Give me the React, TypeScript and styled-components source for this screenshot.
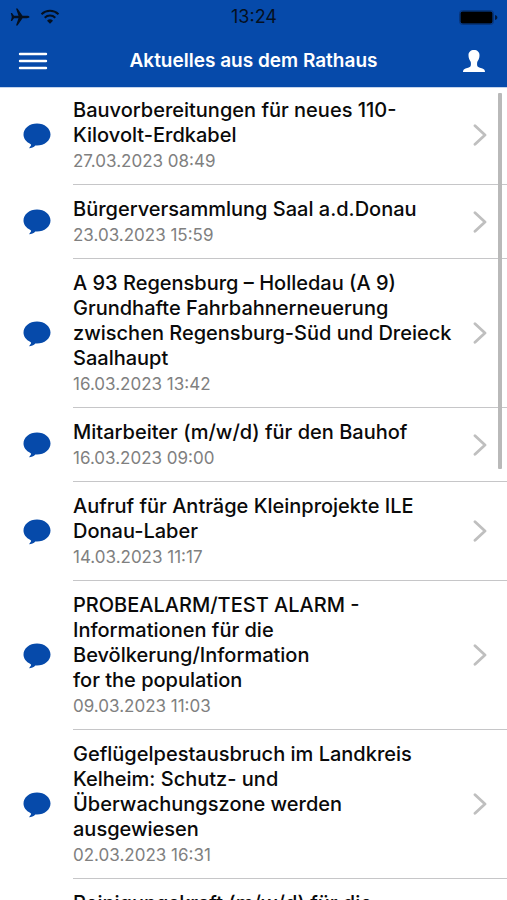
import React from "react";
import styled, { createGlobalStyle } from "styled-components";

const BLUE = "#064aaa";

const GlobalStyle = createGlobalStyle`
  *, *::before, *::after { box-sizing: border-box; }
  body {
    margin: 0;
    background: #fff;
    font-family: Inter, "Liberation Sans", sans-serif;
  }
`;

const Screen = styled.div`
  display: flex;
  flex-direction: column;
  height: 100vh;
  overflow: hidden;
`;

const Header = styled.header`
  flex: none;
  position: relative;
  z-index: 1;
  background: ${BLUE};
  box-shadow: 0 1px 0 ${BLUE}, 0 2px 0 #c3d4ec;
`;

const StatusBar = styled.div`
  display: grid;
  grid-template-columns: 1fr auto 1fr;
  align-items: center;
  height: 34px;
  padding: 0 9px 0 10px;
  color: #05101f;
`;

const StatusGroup = styled.div<{ $end?: boolean }>`
  display: flex;
  align-items: center;
  gap: 10px;
  justify-content: ${(p) => (p.$end ? "flex-end" : "flex-start")};
`;

const Clock = styled.time`
  font-size: 18px;
  line-height: 20px;
`;

const NavBar = styled.nav`
  display: grid;
  grid-template-columns: 48px 1fr 48px;
  align-items: center;
  height: 52px;
  padding: 2px 9px 0;
`;

const IconButton = styled.button`
  display: flex;
  align-items: center;
  justify-content: center;
  height: 44px;
  padding: 0;
  border: 0;
  background: none;
  color: #fff;
  cursor: pointer;
`;

const PageTitle = styled.h1`
  margin: 0;
  color: #fff;
  font-size: 19px;
  font-weight: 600;
  line-height: 24px;
  text-align: center;
`;

const ListArea = styled.main`
  position: relative;
  flex: 1;
  min-height: 0;
`;

const NewsList = styled.ul`
  height: 100%;
  margin: 0;
  padding: 0;
  overflow-y: auto;
  list-style: none;
  scrollbar-width: none;
`;

const NewsLink = styled.a`
  display: grid;
  grid-template-columns: 73px 1fr;
  min-height: 74px;
  color: inherit;
  text-decoration: none;
`;

const BubbleCell = styled.span`
  display: flex;
  align-items: center;
  justify-content: center;
  color: ${BLUE};
`;

const NewsBody = styled.span`
  display: flex;
  align-items: center;
  justify-content: space-between;
  gap: 12px;
  padding-right: 20px;
  border-bottom: 1px solid #c6c6c8;
`;

const NewsText = styled.span`
  flex: 1;
  align-self: flex-start;
  min-width: 0;
  padding: 12px 0 10px;
`;

const NewsTitle = styled.span`
  display: block;
  color: #0a0a0a;
  font-size: 20px;
  font-weight: 500;
  line-height: 25px;
`;

const NewsDate = styled.time`
  display: block;
  color: #808080;
  font-size: 17px;
  line-height: 26px;
`;

const ScrollThumb = styled.div`
  position: absolute;
  top: 7px;
  right: 5px;
  bottom: 53%;
  width: 4px;
  border-radius: 1px;
  background: #b9b9b9;
`;

const PlaneIcon = () => (
  <svg width="20" height="18" viewBox="0 0 20 18" fill="currentColor" aria-hidden="true">
    <path d="M19.500 9c0-.7-1.200-1.200-2.600-1.200H12.500L7.500 .5H6L8.500 7.800H4L2 5H.8L1.800 9 .8 13H2l2-2.800h4.500L6 17.500h1.500l5-7.300h4.400C18.300 10.200 19.500 9.700 19.500 9z" />
  </svg>
);

const WifiIcon = () => (
  <svg width="20" height="16" viewBox="0 0 20 16" fill="none" stroke="currentColor" strokeWidth="2" aria-hidden="true">
    <path d="M1.500 5.200a12.500 12.500 0 0 1 17 0" />
    <path d="M4.700 8.700a7.800 7.800 0 0 1 10.600 0" />
    <path d="M10 14.800 7 11.700a4.400 4.400 0 0 1 6 0z" fill="currentColor" stroke="none" />
  </svg>
);

const BatteryIcon = () => (
  <svg width="39" height="15" viewBox="0 0 39 15" aria-hidden="true">
    <rect x="0.500" y="0.500" width="34" height="14" rx="3" fill="none" stroke="#06357c" />
    <rect x="1.500" y="1.500" width="32" height="12" rx="2" fill="#000" />
    <path d="M36 5c1.600.4 2.400 1.300 2.400 2.500S37.600 9.600 36 10z" fill="#041a3c" />
  </svg>
);

const MenuIcon = () => (
  <svg width="30" height="18" viewBox="0 0 30 18" stroke="currentColor" strokeWidth="2.400" strokeLinecap="round" aria-hidden="true">
    <path d="M2 2h26M2 9h26M2 16h26" />
  </svg>
);

const PersonIcon = () => (
  <svg width="22" height="22" viewBox="0 0 22 22" fill="currentColor" aria-hidden="true">
    <path d="M11 0C7.700 0 5.500 2 5.500 5.300c0 1.400.2 2.500.7 3.600.5 1.400 1.400 2.200 1.600 3.400.2 1.600.3 3.600-.7 4.500-1.400 1.200-4.400 1.300-5.900 2.400C.3 19.900 0 20.800 0 22h22c0-1.200-.3-2.100-1.200-2.800-1.500-1.100-4.500-1.200-5.900-2.400-1-.9-.9-2.900-.7-4.500.2-1.200 1.100-2 1.600-3.400.5-1.100.7-2.200.7-3.600C16.500 2 14.300 0 11 0z" />
  </svg>
);

const BubbleIcon = () => (
  <svg width="28" height="26" viewBox="0 0 28 26" fill="currentColor" aria-hidden="true">
    <path d="M14 .5C6.500.5.500 5.400.500 11.500c0 4 2.600 7.400 6.900 9.400.9.500.9 1.100.4 1.800-.5.8-1.200 1.600-1.800 2.500 2.400-.2 4.800-1 6.300-2.800l1.700.1c7.500 0 13.500-4.900 13.500-11S21.500.5 14 .5z" />
  </svg>
);

const ChevronIcon = () => (
  <svg width="14" height="22" viewBox="0 0 14 22" fill="none" stroke="#bfbfbf" strokeWidth="2.800" strokeLinecap="round" strokeLinejoin="round" aria-hidden="true">
    <path d="M2 1.800 12 11 2 20.200" />
  </svg>
);

const news = [
  { title: "Bauvorbereitungen für neues 110-Kilovolt-Erdkabel", date: "27.03.2023 08:49" },
  { title: "Bürgerversammlung Saal a.d.Donau", date: "23.03.2023 15:59" },
  {
    title: "A 93 Regensburg – Holledau (A 9) Grundhafte Fahrbahnerneuerung zwischen Regensburg-Süd und Dreieck Saalhaupt",
    date: "16.03.2023 13:42",
  },
  { title: "Mitarbeiter (m/w/d) für den Bauhof", date: "16.03.2023 09:00" },
  { title: "Aufruf für Anträge Kleinprojekte ILE Donau-Laber", date: "14.03.2023 11:17" },
  {
    title: "PROBEALARM/TEST ALARM - Informationen für die Bevölkerung/Information for\u00a0the\u00a0population",
    date: "09.03.2023 11:03",
  },
  {
    title: "Geflügelpestausbruch im Landkreis Kelheim: Schutz- und Überwachungszone werden ausgewiesen",
    date: "02.03.2023 16:31",
  },
  { title: "Reinigungskraft (m/w/d) für die", date: "" },
];

export default function App() {
  return (
    <>
      <GlobalStyle />
      <Screen>
        <Header>
          <StatusBar>
            <StatusGroup>
              <PlaneIcon />
              <WifiIcon />
            </StatusGroup>
            <Clock>13:24</Clock>
            <StatusGroup $end>
              <BatteryIcon />
            </StatusGroup>
          </StatusBar>
          <NavBar>
            <IconButton type="button" aria-label="Menü">
              <MenuIcon />
            </IconButton>
            <PageTitle>Aktuelles aus dem Rathaus</PageTitle>
            <IconButton type="button" aria-label="Profil">
              <PersonIcon />
            </IconButton>
          </NavBar>
        </Header>
        <ListArea>
          <NewsList>
            {news.map((item) => (
              <li key={item.title}>
                <NewsLink href="#">
                  <BubbleCell>
                    <BubbleIcon />
                  </BubbleCell>
                  <NewsBody>
                    <NewsText>
                      <NewsTitle>{item.title}</NewsTitle>
                      {item.date && <NewsDate>{item.date}</NewsDate>}
                    </NewsText>
                    <ChevronIcon />
                  </NewsBody>
                </NewsLink>
              </li>
            ))}
          </NewsList>
          <ScrollThumb />
        </ListArea>
      </Screen>
    </>
  );
}
